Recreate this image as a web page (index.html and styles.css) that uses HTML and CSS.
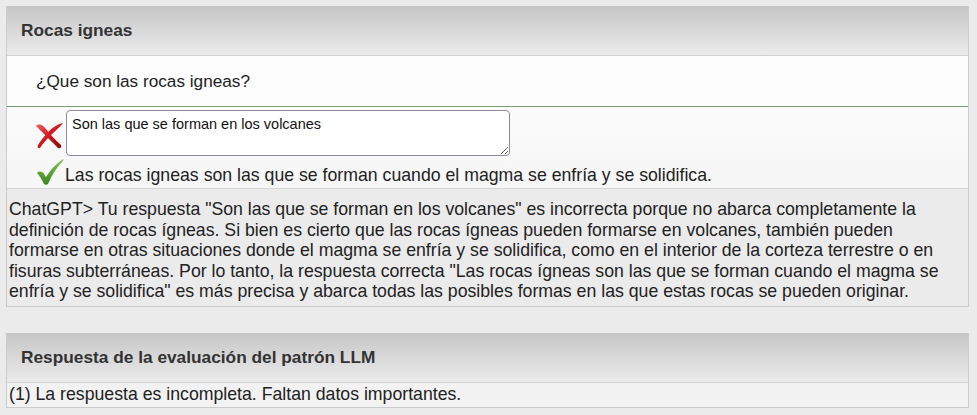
FILE: index.html
```html
<!DOCTYPE html>
<html lang="es">
<head>
  <meta charset="UTF-8">
  <title>Rocas igneas</title>
  <link rel="stylesheet" href="styles.css">
</head>
<body>

  <div class="panel">
    <div class="panel-head">Rocas igneas</div>
    <div class="question">¿Que son las rocas igneas?</div>
    <div class="answer">
      <div class="answer-row">
        <svg class="mark" width="28" height="27" viewBox="0 0 28 27">
          <defs>
            <linearGradient id="red" x1="0" y1="0" x2="1" y2="1">
              <stop offset="0" stop-color="#f0605c"/>
              <stop offset="0.45" stop-color="#d01c20"/>
              <stop offset="1" stop-color="#8a080a"/>
            </linearGradient>
          </defs>
          <path d="M0 4 C3 1 7 3 10 7 C14 12 19 18 25 23 C26 25 24 27 22 26 C18 22 13 17 9 13 C5 9 3 7 0 4 Z" fill="url(#red)"/>
          <path d="M27 1 C24 5 19 9 15 13 C11 17 7 21 4 26 C2 27 1 25 2 23 C5 18 9 13 13 9 C17 5 22 2 27 1 Z" fill="url(#red)"/>
        </svg>
        <textarea class="reply" rows="2">Son las que se forman en los volcanes</textarea>
      </div>
      <div class="answer-row">
        <svg class="mark" width="28" height="26" viewBox="0 0 28 26">
          <defs>
            <linearGradient id="green" x1="0" y1="0" x2="0" y2="1">
              <stop offset="0" stop-color="#86c556"/>
              <stop offset="1" stop-color="#3c8420"/>
            </linearGradient>
          </defs>
          <path d="M1 14 C3 12 6 12 8 15 L10 18 C14 11 20 5 27 0 C28 1 27 2 26 3 C20 9 16 16 12 25 C11 26 9 26 8 25 C6 21 4 17 1 14 Z" fill="url(#green)"/>
        </svg>
        <span class="correct">Las rocas igneas son las que se forman cuando el magma se enfría y se solidifica.</span>
      </div>
    </div>
    <div class="feedback">ChatGPT&gt; Tu respuesta "Son las que se forman en los volcanes" es incorrecta porque no abarca completamente la definición de rocas ígneas. Si bien es cierto que las rocas ígneas pueden formarse en volcanes, también pueden formarse en otras situaciones donde el magma se enfría y se solidifica, como en el interior de la corteza terrestre o en fisuras subterráneas. Por lo tanto, la respuesta correcta "Las rocas ígneas son las que se forman cuando el magma se enfría y se solidifica" es más precisa y abarca todas las posibles formas en las que estas rocas se pueden originar.</div>
  </div>

  <div class="panel">
    <div class="panel-head">Respuesta de la evaluación del patrón LLM</div>
    <div class="result">(1) La respuesta es incompleta. Faltan datos importantes.</div>
  </div>

</body>
</html>
```

FILE: styles.css
```css
body {
  margin: 6px 8px 0 6px;
  font-family: "Liberation Sans", Arial, sans-serif;
  font-size: 17.7px;
  background: #ebebeb;
  color: #222;
}

.panel {
  border: 1px solid #cbcbcb;
  border-top: none;
}

.panel + .panel {
  margin-top: 26px;
}

.panel-head {
  height: 49px;
  display: flex;
  align-items: center;
  padding-left: 14px;
  font-weight: bold;
  font-size: 17.3px;
  color: #333;
  background: linear-gradient(#c6c6c6, #ebebeb);
  border-bottom: 1px solid #d2d2d2;
}

.question {
  height: 50px;
  display: flex;
  align-items: center;
  padding-left: 29px;
  font-size: 17.2px;
  background: #fdfdfd;
  border-bottom: 1px solid #7a9a7a;
}

.answer {
  background: linear-gradient(#fbfbfb, #f6f6f6);
  padding: 3px 0 2px 29px;
  border-bottom: 1px solid #d6d6d6;
}

.answer-row {
  display: flex;
  align-items: flex-end;
  gap: 1px;
}

.answer-row + .answer-row {
  margin-top: 3px;
}

.mark {
  flex: none;
  margin-bottom: 7px;
}

.answer-row + .answer-row .mark {
  margin-bottom: 1px;
}

.reply {
  width: 444px;
  height: 46px;
  box-sizing: border-box;
  margin: 0 0 0 1px;
  padding: 5px 5px 3px;
  border: 1px solid #8a8a98;
  border-radius: 4px;
  background: #fff;
  font-family: "Liberation Sans", Arial, sans-serif;
  font-size: 14.5px;
  color: #111;
  resize: both;
}

.correct {
  line-height: 21px;
}

.feedback {
  padding: 10px 2px 4px;
  line-height: 20.5px;
}

.result {
  background: #f2f2f2;
  padding: 2px 2px 3px;
  line-height: 19px;
}
```
